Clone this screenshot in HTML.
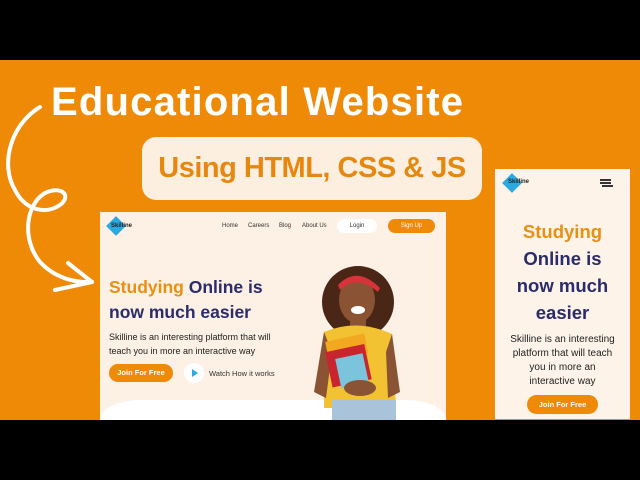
<!DOCTYPE html>
<html><head><meta charset="utf-8"><style>
*{margin:0;padding:0;box-sizing:border-box}
body{width:640px;height:480px;overflow:hidden;background:#000;font-family:"Liberation Sans",sans-serif;position:relative}
.or{position:absolute;left:0;top:60px;width:640px;height:360px;background:#EF8A07;overflow:hidden}
.abs{position:absolute}
h1{position:absolute;left:51px;top:80px;color:#fff;font-size:40px;font-weight:bold;letter-spacing:1.2px;white-space:nowrap}
.pill{position:absolute;left:142px;top:137px;width:340px;height:63px;background:#FDEFE0;border-radius:14px;color:#E8870E;font-size:29px;font-weight:bold;text-align:center;line-height:63px;letter-spacing:-0.5px}
.card{position:absolute;left:100px;top:212px;width:346px;height:208px;background:#FDF0E4;overflow:hidden}
.m{position:absolute;left:495px;top:169px;width:135px;height:250px;background:#FDF3E9}
.logo{position:absolute;width:14px;height:14px;background:#2BA9E1;transform:rotate(45deg)}
.lt{position:absolute;font-size:6px;font-weight:bold;color:#222}
.nav{position:absolute;top:223px;font-size:6px;color:#333}
.navy{color:#2A2C6B}.org{color:#E8900F}
</style></head><body>
<div class="or"></div>
<svg class="abs" style="left:0;top:0" width="110" height="300" viewBox="0 0 110 300">
<path d="M40 107 C10 125 0 165 15 190 C25 210 45 215 60 205 C72 196 62 185 45 193 C25 205 22 240 40 262 C55 278 75 283 92 282" fill="none" stroke="#fff" stroke-width="4" stroke-linecap="round"/>
<path d="M68 263 L92 282 L55 290" fill="none" stroke="#fff" stroke-width="4" stroke-linecap="round" stroke-linejoin="round"/>
</svg>
<h1>Educational Website</h1>
<div class="pill">Using HTML, CSS &amp; JS</div>
<div class="card">
  <div style="position:absolute;left:0;top:188px;width:346px;height:60px;background:#fff;border-radius:40px 40px 0 0/20px 20px 0 0"></div>
</div>
<div class="logo" style="left:109px;top:219px"></div>
<div class="lt" style="left:111px;top:223px">Skilline</div>
<div class="nav" style="left:222px">Home</div>
<div class="nav" style="left:248px">Careers</div>
<div class="nav" style="left:279px">Blog</div>
<div class="nav" style="left:302px">About Us</div>
<div class="abs" style="left:337px;top:219px;width:40px;height:14px;background:#fff;border-radius:7px;font-size:6px;text-align:center;line-height:14px;color:#333">Login</div>
<div class="abs" style="left:388px;top:219px;width:47px;height:14px;background:#EF8A07;border-radius:7px;font-size:6px;text-align:center;line-height:14px;color:#fff">Sign Up</div>
<div class="abs navy" style="left:109px;top:275px;font-size:17.5px;font-weight:bold;line-height:25px;white-space:nowrap"><span class="org">Studying</span> Online is<br>now much easier</div>
<div class="abs" style="left:109px;top:330px;font-size:9px;line-height:14px;color:#222;white-space:nowrap">Skilline is an interesting platform that will<br>teach you in more an interactive way</div>
<div class="abs" style="left:109px;top:364px;width:64px;height:18px;background:#EF8A07;border-radius:9px;color:#fff;font-size:7.5px;font-weight:bold;text-align:center;line-height:18px">Join For Free</div>
<div class="abs" style="left:184px;top:363px;width:20px;height:20px;background:#fff;border-radius:50%"></div>
<div class="abs" style="left:192px;top:369px;width:0;height:0;border-left:6px solid #2BA9E1;border-top:4px solid transparent;border-bottom:4px solid transparent"></div>
<div class="abs" style="left:209px;top:369px;font-size:7.5px;color:#333">Watch How it works</div>
<svg class="abs" style="left:300px;top:260px" width="110" height="160" viewBox="0 0 110 160">
<ellipse cx="58" cy="42" rx="36" ry="36" fill="#4A2616"/>
<ellipse cx="57" cy="40" rx="18" ry="23" fill="#8A5334"/>
<path d="M38 25 Q57 5 80 28 L78 32 Q57 14 40 30Z" fill="#D8323A"/>
<ellipse cx="58" cy="50" rx="7" ry="4" fill="#fff"/>
<rect x="50" y="60" width="16" height="14" fill="#8A5334"/>
<path d="M24 72 Q57 58 92 74 L96 148 L24 148Z" fill="#F2C233"/>
<rect x="32" y="140" width="64" height="20" fill="#A9C4DA"/>
<path d="M24 72 L14 132 L26 138 L32 92Z" fill="#8A5334"/>
<path d="M92 74 L100 132 L88 138 L86 92Z" fill="#8A5334"/>
<rect x="26" y="78" width="40" height="20" fill="#F3A91F" transform="rotate(-12 44 84)"/>
<rect x="28" y="88" width="40" height="36" fill="#C9252E" transform="rotate(-12 47 104)"/>
<rect x="38" y="96" width="28" height="30" fill="#7CC3DC" transform="rotate(-12 51 111)"/>
<ellipse cx="60" cy="128" rx="16" ry="8" fill="#8A5334"/>
</svg>
<div class="m"></div>
<div class="logo" style="left:505px;top:176px"></div>
<div class="lt" style="left:508px;top:179px">Skilline</div>
<div class="abs" style="left:600px;top:179px;width:11px;height:1.5px;background:#333;box-shadow:0 3px 0 #333,2px 6px 0 #333"></div>
<div class="abs navy" style="left:495px;top:218px;width:135px;text-align:center;font-size:18.5px;font-weight:bold;line-height:27px"><span class="org">Studying</span><br>Online is<br>now much<br>easier</div>
<div class="abs" style="left:495px;top:333px;width:135px;text-align:center;font-size:10px;line-height:14px;color:#222;white-space:nowrap">Skilline is an interesting<br>platform that will teach<br>you in more an<br>interactive way</div>
<div class="abs" style="left:527px;top:395px;width:71px;height:19px;background:#EF8A07;border-radius:10px;color:#fff;font-size:7.5px;font-weight:bold;text-align:center;line-height:19px">Join For Free</div>
<div class="abs" style="left:0;top:420px;width:640px;height:60px;background:#000"></div>
</body></html>
